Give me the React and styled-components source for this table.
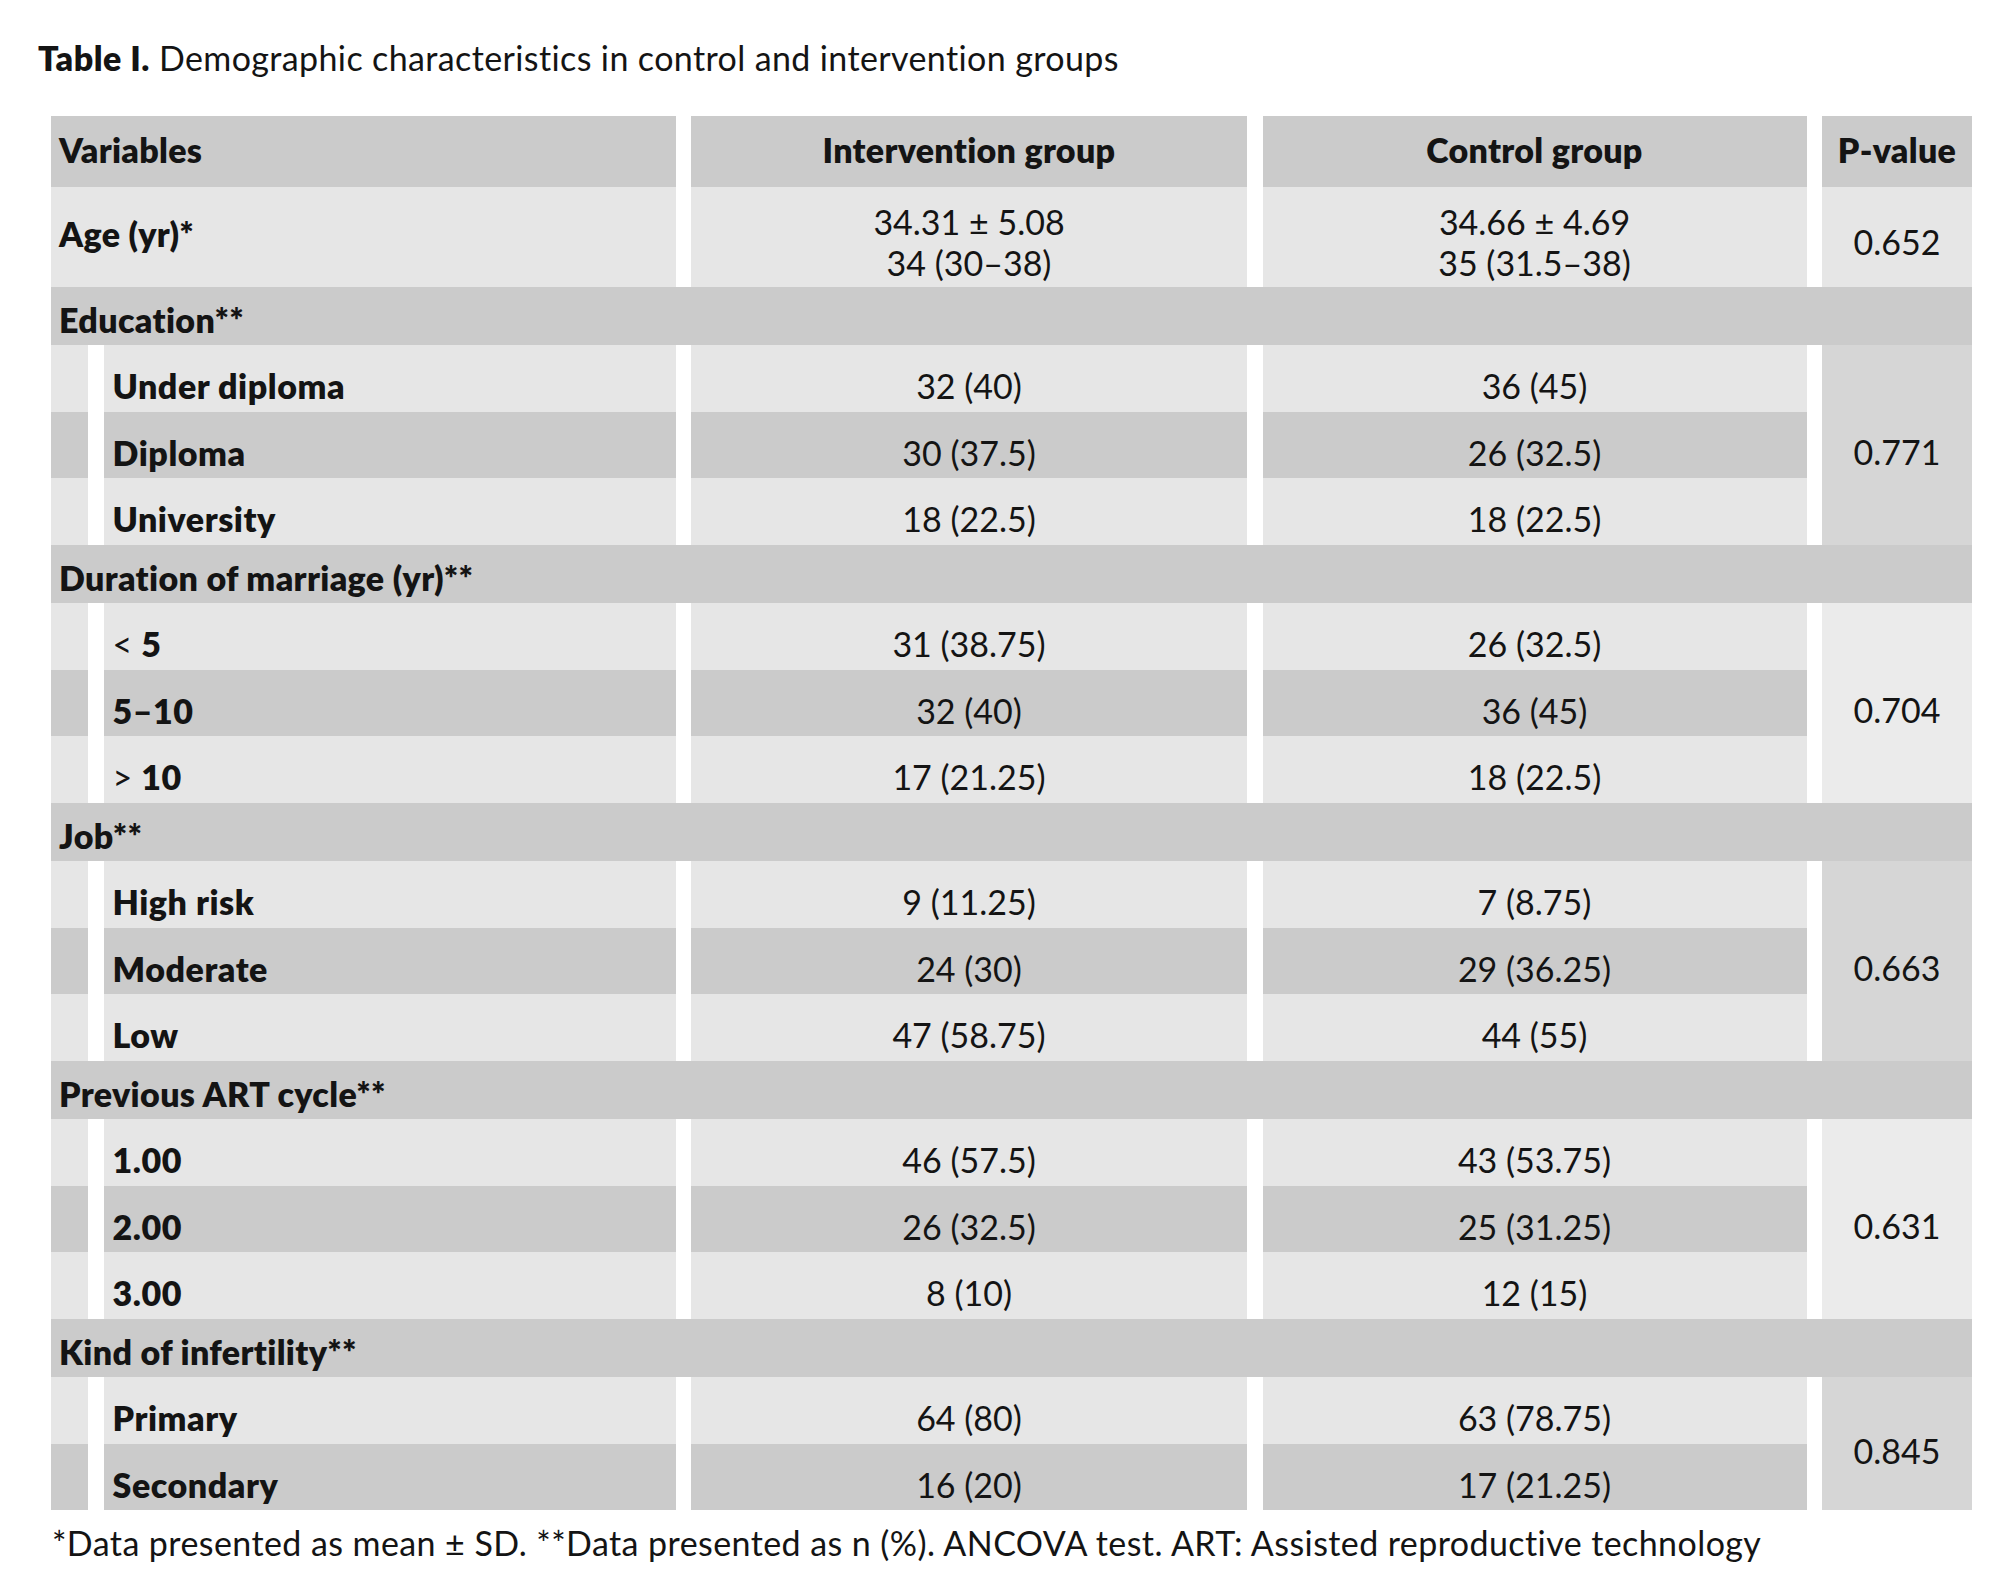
import React from 'react'
import styled, { createGlobalStyle } from 'styled-components'

const Global = createGlobalStyle`
  body {
    margin: 0;
    background: #fff;
    color: #141414;
    font-family: Lato, "Open Sans", sans-serif;
    font-size: 34px;
    line-height: 41px;
  }
`

const LIGHT = '#e6e6e6'
const DARK = '#cbcbcb'
const COLUMNS = '37px 572px 556px 544px 150px'

const Page = styled.div`
  display: flex;
  flex-direction: column;
  padding-top: 37px;
`
const Title = styled.div`
  margin-left: 38px;
  letter-spacing: 0.38px;
  b { font-weight: 800; letter-spacing: 0.5px; }
`
const Table = styled.div`
  display: flex;
  flex-direction: column;
  width: 1921px;
  margin: 38px 0 0 51px;
`
const Row = styled.div`
  display: grid;
  grid-template-columns: ${COLUMNS};
  column-gap: 15.5px;
  height: ${p => p.$height}px;
`
const Body = styled.div`
  display: grid;
  grid-template-columns: ${COLUMNS};
  grid-auto-rows: 66.67px;
  column-gap: 15.5px;
`
const Cell = styled.div`
  grid-column: ${p => p.$col};
  background: ${p => p.$bg || LIGHT};
  padding-top: ${p => p.$pad || 0}px;
  padding-left: ${p => (p.$left ? 8 : 0)}px;
  text-align: ${p => (p.$left ? 'left' : 'center')};
  font-weight: ${p => (p.$bold ? 800 : 400)};
  letter-spacing: ${p => (p.$bold ? '0.3px' : '0')};
  white-space: nowrap;
`
const Strip = styled.div`
  grid-column: 1;
  background: ${p => p.$bg};
`
const SubLabel = styled.div`
  grid-column: 2;
  background: ${p => p.$bg};
  padding: 20px 0 0 9px;
  font-weight: 800;
  letter-spacing: 0.55px;
  white-space: nowrap;
  i { font-style: normal; font-weight: 400; }
`
const Value = styled.div`
  grid-column: ${p => p.$col};
  background: ${p => p.$bg};
  padding-top: 20px;
  text-align: center;
`
const PCell = styled.div`
  grid-column: 5;
  grid-row: 1 / span ${p => p.$span};
  display: flex;
  align-items: center;
  justify-content: center;
  padding-top: 14px;
  background: ${p => p.$bg};
`
const GroupBar = styled.div`
  height: 58px;
  background: ${DARK};
  padding: 12px 0 0 8px;
  box-sizing: border-box;
  font-weight: 800;
  letter-spacing: 0.35px;
`
const Footnote = styled.div`
  margin: 12px 0 0 52px;
  letter-spacing: 0.42px;
`

const groups = [
  {
    name: 'Education**',
    p: '0.771',
    rows: [
      ['Under diploma', '32 (40)', '36 (45)'],
      ['Diploma', '30 (37.5)', '26 (32.5)'],
      ['University', '18 (22.5)', '18 (22.5)'],
    ],
  },
  {
    name: 'Duration of marriage (yr)**',
    p: '0.704',
    rows: [
      [<><i>&lt;</i> 5</>, '31 (38.75)', '26 (32.5)'],
      ['5–10', '32 (40)', '36 (45)'],
      [<><i>&gt;</i> 10</>, '17 (21.25)', '18 (22.5)'],
    ],
  },
  {
    name: 'Job**',
    p: '0.663',
    rows: [
      ['High risk', '9 (11.25)', '7 (8.75)'],
      ['Moderate', '24 (30)', '29 (36.25)'],
      ['Low', '47 (58.75)', '44 (55)'],
    ],
  },
  {
    name: 'Previous ART cycle**',
    p: '0.631',
    rows: [
      ['1.00', '46 (57.5)', '43 (53.75)'],
      ['2.00', '26 (32.5)', '25 (31.25)'],
      ['3.00', '8 (10)', '12 (15)'],
    ],
  },
  {
    name: 'Kind of infertility**',
    p: '0.845',
    rows: [
      ['Primary', '64 (80)', '63 (78.75)'],
      ['Secondary', '16 (20)', '17 (21.25)'],
    ],
  },
]

const Group = ({ group, index }) => (
  <>
    <GroupBar>{group.name}</GroupBar>
    <Body>
      {group.rows.map(([label, a, b], i) => {
        const bg = i % 2 ? DARK : LIGHT
        return (
          <React.Fragment key={i}>
            <Strip $bg={bg} />
            <SubLabel $bg={bg}>{label}</SubLabel>
            <Value $col={3} $bg={bg}>{a}</Value>
            <Value $col={4} $bg={bg}>{b}</Value>
            {i === 0 && (
              <PCell $span={group.rows.length} $bg={index % 2 ? '#ebebeb' : '#d6d6d6'}>
                {group.p}
              </PCell>
            )}
          </React.Fragment>
        )
      })}
    </Body>
  </>
)

export default function App() {
  return (
    <Page>
      <Global />
      <Title><b>Table I.</b> Demographic characteristics in control and intervention groups</Title>
      <Table>
        <Row $height={71}>
          <Cell $col="1 / 3" $bg={DARK} $pad={13} $left $bold>Variables</Cell>
          <Cell $col={3} $bg={DARK} $pad={13} $bold>Intervention group</Cell>
          <Cell $col={4} $bg={DARK} $pad={13} $bold>Control group</Cell>
          <Cell $col={5} $bg={DARK} $pad={13} $bold>P-value</Cell>
        </Row>
        <Row $height={100}>
          <Cell $col="1 / 3" $pad={26} $left $bold>Age (yr)*</Cell>
          <Cell $col={3} $pad={14}>34.31 ± 5.08<br />34 (30–38)</Cell>
          <Cell $col={4} $pad={14}>34.66 ± 4.69<br />35 (31.5–38)</Cell>
          <Cell $col={5} $pad={34}>0.652</Cell>
        </Row>
        {groups.map((g, i) => <Group key={g.p} group={g} index={i} />)}
      </Table>
      <Footnote>
        *Data presented as mean ± SD. **Data presented as n (%). ANCOVA test. ART: Assisted reproductive technology
      </Footnote>
    </Page>
  )
}
